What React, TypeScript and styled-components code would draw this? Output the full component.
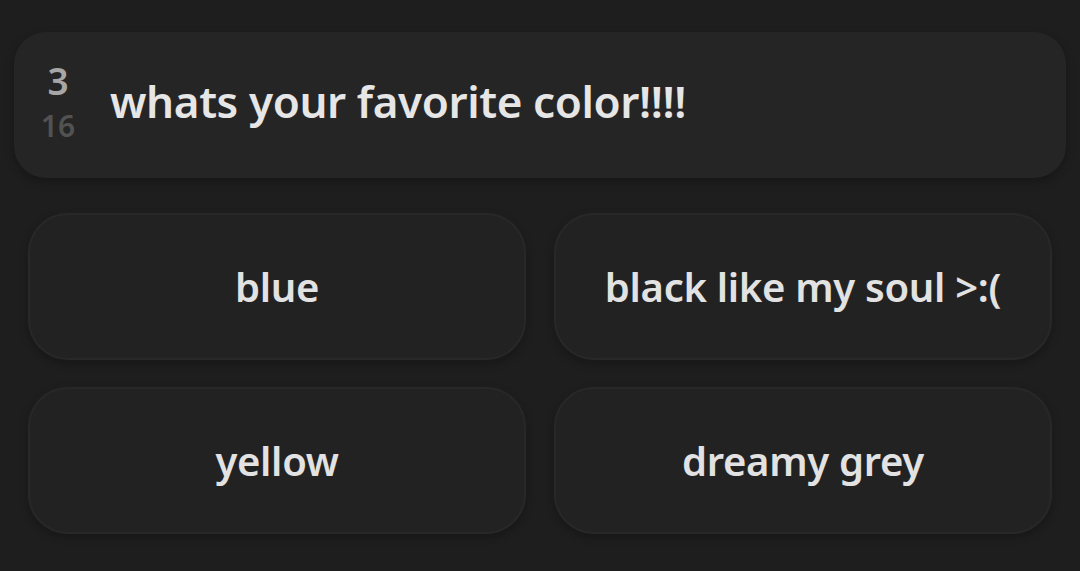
import React from "react";
import styled, { createGlobalStyle } from "styled-components";

const GlobalStyle = createGlobalStyle`
  html, body {
    margin: 0;
    padding: 0;
    background: #1e1e1e;
    font-family: "Source Sans Pro", "Noto Sans", "Open Sans", sans-serif;
  }
`;

const Page = styled.div`
  width: 1080px;
  height: 571px;
  box-sizing: border-box;
  padding: 32px 14px 0;
  background: #1e1e1e;
`;

const QuestionCard = styled.div`
  display: flex;
  align-items: center;
  height: 146px;
  box-sizing: border-box;
  padding: 0 0 0 24px;
  background: #252525;
  border-radius: 32px;
  box-shadow: 0 4px 10px rgba(0, 0, 0, 0.25);
`;

const Counter = styled.div`
  display: flex;
  flex-direction: column;
  align-items: center;
  width: 40px;
  margin: -8px 32px 0 0;
  font-weight: 600;
  line-height: 1;
`;

const Current = styled.span`
  font-size: 37px;
  color: #a6a6a6;
`;

const Total = styled.span`
  margin-top: 12px;
  font-size: 30px;
  color: #525252;
`;

const QuestionText = styled.h1`
  margin: -9px 0 0;
  font-size: 44px;
  font-weight: 600;
  color: #e6e6e6;
  letter-spacing: -0.4px;
`;

const Options = styled.div`
  display: grid;
  grid-template-columns: 1fr 1fr;
  column-gap: 28px;
  row-gap: 27px;
  padding: 35px 14px 0;
`;

const Option = styled.button`
  height: 147px;
  border: 2px solid #282828;
  border-radius: 40px;
  background: #222222;
  box-shadow: 0 0 6px rgba(255, 255, 255, 0.03), 0 3px 8px rgba(0, 0, 0, 0.3);
  color: #e2e2e2;
  font-family: inherit;
  font-size: 40px;
  font-weight: 600;
  letter-spacing: -0.3px;
  cursor: pointer;
`;

const answers = ["blue", "black like my soul >:(", "yellow", "dreamy grey"];

const App = () => {
  return (
    <>
      <GlobalStyle />
      <Page>
        <QuestionCard>
          <Counter>
            <Current>3</Current>
            <Total>16</Total>
          </Counter>
          <QuestionText>whats your favorite color!!!!</QuestionText>
        </QuestionCard>
        <Options>
          {answers.map((a) => (
            <Option key={a} type="button">
              {a}
            </Option>
          ))}
        </Options>
      </Page>
    </>
  );
};

export default App;
